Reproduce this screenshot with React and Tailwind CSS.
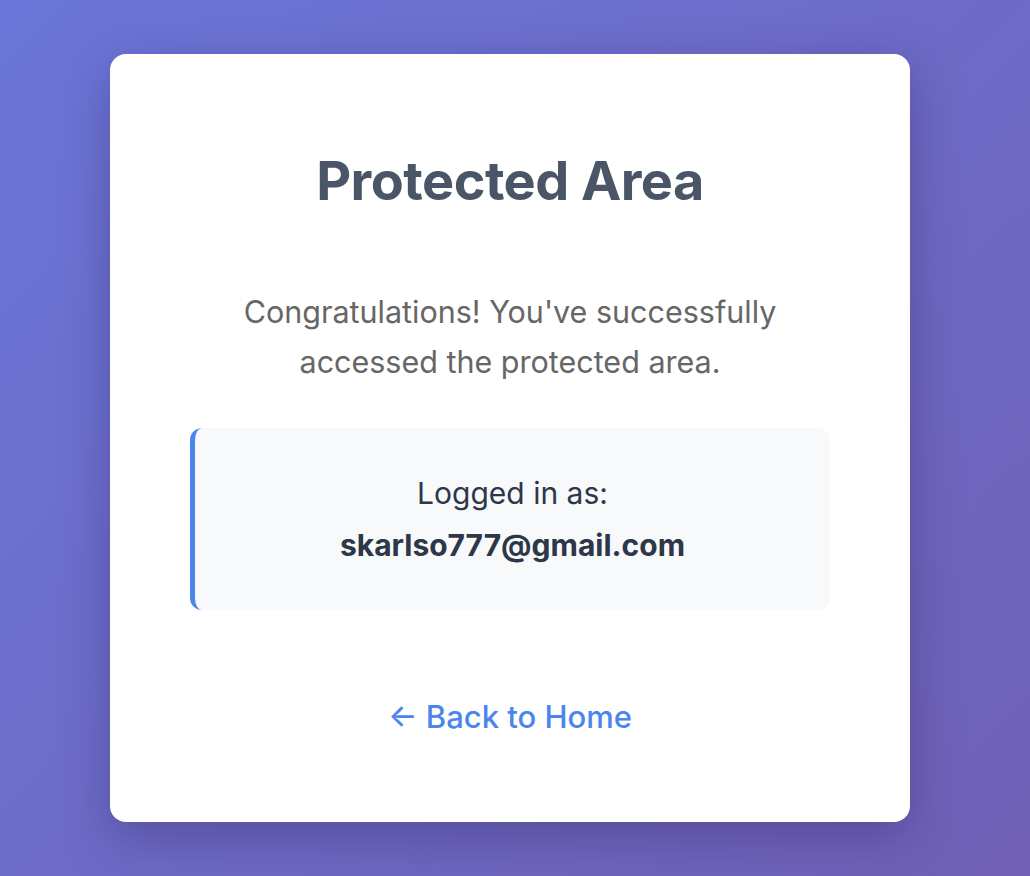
import React from 'react';

function App() {
  const email = 'skarlso777@gmail.com';

  return (
    <div className="min-h-[876px] w-full flex items-start justify-center pt-[54px] pr-[10px] bg-[linear-gradient(135deg,#6b76d8_0%,#7060b6_100%)] font-['Inter','Noto_Sans',sans-serif]">
      <div className="w-[800px] h-[768px] bg-white rounded-2xl shadow-[0_15px_50px_rgba(40,30,90,0.35)] px-20 pt-[95px] text-center">
        <h1 className="text-[54px] leading-[64px] font-bold text-[#4a5568] tracking-[-0.01em]">Protected Area</h1>
        <p className="mt-[74px] text-[30.5px] leading-[50px] text-[#666666]">
          Congratulations! You've successfully
          <br />
          accessed the protected area.
        </p>
        <div className="mt-[41px] h-[182px] bg-[#f7f9fb] rounded-xl border-l-[5px] border-[#4a86ee] flex flex-col items-center justify-center text-[30px] leading-[52px] text-[#2d3748]">
          <div>Logged in as:</div>
          <div className="font-bold">{email}</div>
        </div>
        <a href="#" className="inline-block mt-[87px] text-[31px] leading-[40px] font-medium text-[#4a86ee]">
          ← Back to Home
        </a>
      </div>
    </div>
  );
}

export default App;
